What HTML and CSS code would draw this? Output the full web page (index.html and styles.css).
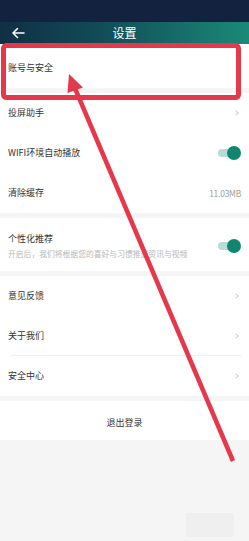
FILE: index.html
```html
<!DOCTYPE html>
<html lang="zh">
<head>
<meta charset="utf-8">
<link rel="stylesheet" href="styles.css">
</head>
<body>
<div class="page">
  <div class="status"></div>
  <div class="header">
    <svg class="back" width="14" height="12" viewBox="0 0 14 12"><path d="M13 6H2M6.5 1.5L2 6l4.5 4.5" fill="none" stroke="#fff" stroke-width="1.6" stroke-linecap="round" stroke-linejoin="round"/></svg>
    <div class="title">设置</div>
  </div>
  <div class="row first"><span class="label">账号与安全</span></div>
  <div class="band"></div>
  <div class="row"><span class="label">投屏助手</span><span class="chev"></span></div>
  <div class="row"><span class="label">WIFI环境自动播放</span><span class="toggle"><span class="knob"></span></span></div>
  <div class="row"><span class="label">清除缓存</span><span class="value">11.03MB</span></div>
  <div class="band"></div>
  <div class="row tall">
    <div class="texts">
      <span class="label">个性化推荐</span>
      <span class="sub">开启后，我们将根据您的喜好与习惯推送资讯与视频</span>
    </div>
    <span class="toggle"><span class="knob"></span></span>
  </div>
  <div class="band"></div>
  <div class="row"><span class="label">意见反馈</span><span class="chev"></span></div>
  <div class="row divided"><span class="label">关于我们</span><span class="chev"></span></div>
  <div class="row"><span class="label">安全中心</span><span class="chev"></span></div>
  <div class="band"></div>
  <div class="row logout"><span class="label">退出登录</span></div>
  <div class="rest"></div>

  <div class="watermark"></div>
  <svg class="annot" width="249" height="541" viewBox="0 0 249 541">
    <rect x="3.5" y="45.5" width="235" height="52" rx="3" fill="none" stroke="#e5384a" stroke-width="5"/>
    <line x1="233" y1="461" x2="74" y2="86" stroke="#e5384a" stroke-width="4.5" stroke-linecap="butt"/>
    <polygon points="69,74 83,87.5 67.5,93" fill="#e5384a"/>
  </svg>
</div>
</body>
</html>
```
FILE: styles.css
```css
* { box-sizing: border-box; }
html, body { margin: 0; padding: 0; }
body {
  width: 249px;
  height: 541px;
  overflow: hidden;
  background: #f5f5f5;
  font-family: "Noto Sans CJK SC", "Noto Sans", sans-serif;
  color: #333;
}
.page { position: relative; width: 249px; height: 541px; display: flex; flex-direction: column; }
.status { height: 22px; background: #13223f; flex: none; }
.header {
  height: 22px; flex: none;
  background: linear-gradient(90deg, #0f2f45 0%, #124b57 40%, #1a8a78 100%);
  display: flex; align-items: center; justify-content: center;
  position: relative;
}
.back { position: absolute; left: 11px; top: 5px; }
.title { color: #fff; font-size: 12px; line-height: 22px; }
.row {
  height: 40px; flex: none;
  background: #fff;
  display: flex; align-items: center; justify-content: space-between;
  padding: 0 8px;
  position: relative;
}
.row.first { height: 44px; padding-top: 4px; }
.row.tall { height: 53px; padding-top: 2px; }
.row.divided::after {
  content: ""; position: absolute; left: 11px; right: 8px; bottom: 0;
  height: 1px; background: #f0f0f0;
}
.label { font-size: 9px; line-height: 12px; color: #333; white-space: nowrap; }
.texts { display: flex; flex-direction: column; gap: 3px; }
.sub { font-size: 7.8px; line-height: 11px; color: #b8b8b8; white-space: nowrap; }
.band { height: 5px; flex: none; background: #f5f5f5; }
.value { font-size: 8.4px; color: #9a9a9a; letter-spacing: -0.2px; }
.chev {
  width: 4px; height: 4px; margin-right: 3px;
  border-top: 1px solid #cfcfcf; border-right: 1px solid #cfcfcf;
  transform: rotate(45deg);
}
.toggle {
  position: relative; width: 23px; height: 14px;
  display: flex; align-items: center;
}
.toggle::before {
  content: ""; position: absolute; left: 0; right: 4px; top: 3px; height: 8px;
  border-radius: 4px; background: #b6ddd6;
}
.knob {
  position: absolute; right: 0; top: 0;
  width: 14px; height: 14px; border-radius: 50%;
  background: #0f8670;
}
.logout { justify-content: center; height: 39px; padding-top: 4px; }
.rest { flex: 1; background: #f5f5f5; }
.watermark {
  position: absolute; left: 186px; top: 513px; width: 48px; height: 24px;
  background: #efefef; border-radius: 2px;
}
.annot { position: absolute; left: 0; top: 0; pointer-events: none; }
```
